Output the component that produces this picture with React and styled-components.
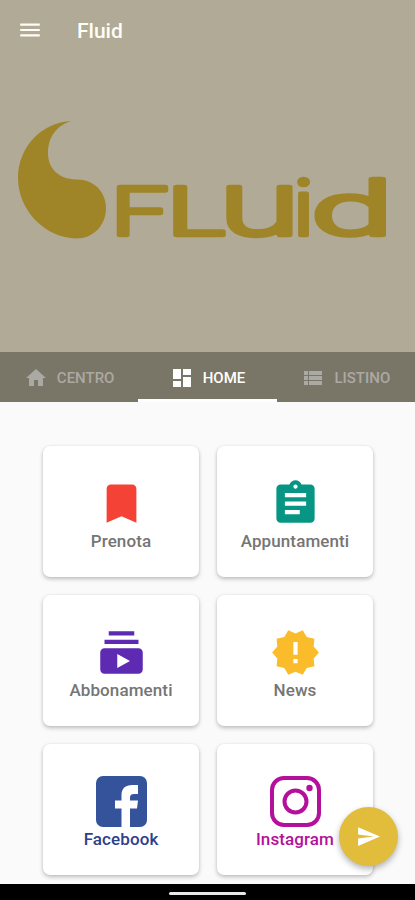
import React, { useState } from 'react';
import styled, { createGlobalStyle } from 'styled-components';
import {
  MdAssignment,
  MdBookmark,
  MdDashboard,
  MdHome,
  MdMenu,
  MdNewReleases,
  MdSend,
  MdSubscriptions,
  MdViewList,
} from 'react-icons/md';

const Global = createGlobalStyle`
  * {
    box-sizing: border-box;
  }

  body {
    margin: 0;
    background-color: #fafafa;
    font-family: Roboto, 'Liberation Sans', sans-serif;
  }

  button {
    border: 0;
    padding: 0;
    background: none;
    font: inherit;
    cursor: pointer;
  }
`;

const Screen = styled.div`
  position: relative;
  height: 900px;
  display: flex;
  flex-direction: column;
  overflow: hidden;
  background-color: #fafafa;
`;

const Hero = styled.header`
  height: 352px;
  flex: none;
  background-color: #b0aa96;
`;

const Toolbar = styled.div`
  height: 60px;
  padding-left: 17px;
  display: flex;
  align-items: center;
  gap: 34px;
  color: #fffdf5;

  & button {
    display: flex;
    color: inherit;
  }

  & h1 {
    margin: 2px 0 0;
    font-size: 21px;
    font-weight: 500;
    line-height: 26px;
  }
`;

const Logo = styled.svg`
  display: block;
  width: 415px;
  height: 200px;
  fill: #a08528;
  font-family: Roboto, 'Liberation Sans', sans-serif;
  font-weight: 300;

  & text {
    stroke: #a08528;
    stroke-width: 4.5px;
    stroke-linejoin: round;
  }
`;

const TabBar = styled.nav`
  height: 50px;
  flex: none;
  display: flex;
  background-color: #7a7667;
`;

const Tab = styled.button`
  flex: 1;
  display: flex;
  align-items: center;
  justify-content: center;
  gap: 9px;
  padding-top: 4px;
  border-bottom: 3px solid ${({ $active }) => ($active ? '#fff' : 'transparent')};
  color: ${({ $active }) => ($active ? '#fff' : '#aaa9a3')};
  font-size: 15px;
  font-weight: 500;
`;

const Grid = styled.main`
  flex: 1;
  min-height: 0;
  padding: 44px 42px 0 43px;
  display: grid;
  grid-template-columns: 1fr 1fr;
  grid-auto-rows: 131px;
  gap: 18px;
  align-content: start;
  overflow: hidden;
`;

const Card = styled.button`
  padding-top: 32px;
  display: flex;
  flex-direction: column;
  align-items: center;
  border-radius: 7px;
  background-color: #fff;
  box-shadow: 0 2px 4px rgba(0, 0, 0, 0.24), 0 0 2px rgba(0, 0, 0, 0.08);

  & svg {
    display: block;
    color: ${({ $color }) => $color};
  }
`;

const Label = styled.span`
  color: ${({ $color }) => $color};
  font-size: 17px;
  font-weight: 500;
  line-height: 24px;
  letter-spacing: 0.1px;
`;

const Fab = styled.button`
  position: absolute;
  right: 17px;
  bottom: 34px;
  width: 59px;
  height: 59px;
  display: flex;
  align-items: center;
  justify-content: center;
  border-radius: 50%;
  background-color: #e2bc3b;
  color: #fff;
  box-shadow: 0 3px 6px rgba(0, 0, 0, 0.3);
`;

const SystemBar = styled.footer`
  height: 16px;
  flex: none;
  display: flex;
  justify-content: center;
  align-items: center;
  background-color: #000;

  & span {
    width: 77px;
    height: 3px;
    margin-top: 2px;
    border-radius: 2px;
    background-color: #e8e8e8;
  }
`;

function FluidLogo() {
  return (
    <Logo viewBox="0 60 415 200">
      <path d="M71.5 121C54 126 48 140 48 153C48 168 58 179 76 179.500C94 179 106 192 106 208C106 225 94 238.500 76 238.500C46 238 18 211 18 178C18 147 42 122 71.500 121Z" />
      <text y="234.500">
        <tspan x="111" fontSize="67" textLength="57" lengthAdjust="spacingAndGlyphs">F</tspan>
        <tspan x="167" fontSize="67" textLength="58" lengthAdjust="spacingAndGlyphs">L</tspan>
        <tspan x="219" fontSize="90" textLength="81" lengthAdjust="spacingAndGlyphs">u</tspan>
        <tspan x="293" fontSize="78" textLength="21" lengthAdjust="spacingAndGlyphs">i</tspan>
        <tspan x="311" fontSize="75" textLength="82" lengthAdjust="spacingAndGlyphs">d</tspan>
      </text>
    </Logo>
  );
}

function FacebookIcon() {
  return (
    <svg width="51" height="51" viewBox="0 0 51 51">
      <rect width="51" height="51" rx="7" fill="#34539b" />
      <path
        d="M25.500 51V32.500H19V24.500H25.500V19C25.500 12.500 29.500 9 36 9H42V18H38C35.500 18 34 19 34 21.500V24.500H42L41 32.500H34V51Z"
        fill="#fff"
      />
    </svg>
  );
}

function InstagramIcon() {
  return (
    <svg width="51" height="51" viewBox="0 0 51 51" fill="none" stroke="currentColor">
      <rect x="2" y="2" width="47" height="47" rx="12" strokeWidth="4" />
      <circle cx="25.500" cy="25.500" r="11" strokeWidth="4" />
      <circle cx="39.500" cy="12" r="3.200" fill="currentColor" stroke="none" />
    </svg>
  );
}

const tabs = [
  { name: 'CENTRO', Icon: MdHome },
  { name: 'HOME', Icon: MdDashboard },
  { name: 'LISTINO', Icon: MdViewList },
];

const cards = [
  { name: 'Prenota', Icon: MdBookmark, color: '#f44336' },
  { name: 'Appuntamenti', Icon: MdAssignment, color: '#089684' },
  { name: 'Abbonamenti', Icon: MdSubscriptions, color: '#5e2ab2' },
  { name: 'News', Icon: MdNewReleases, color: '#fbbc2b' },
  { name: 'Facebook', Icon: FacebookIcon, color: '#34539b', labelColor: '#2c418c' },
  { name: 'Instagram', Icon: InstagramIcon, color: '#b5109b', labelColor: '#b5109b' },
];

function App() {
  const [current, setCurrent] = useState('HOME');

  return (
    <Screen>
      <Global />
      <Hero>
        <Toolbar>
          <button aria-label="Menu">
            <MdMenu size={26} />
          </button>
          <h1>Fluid</h1>
        </Toolbar>
        <FluidLogo />
      </Hero>

      <TabBar>
        {tabs.map(({ name, Icon }) => (
          <Tab key={name} $active={name === current} onClick={() => setCurrent(name)}>
            <Icon size={24} />
            {name}
          </Tab>
        ))}
      </TabBar>

      <Grid>
        {cards.map(({ name, Icon, color, labelColor }) => (
          <Card key={name} $color={color}>
            <Icon size={51} />
            <Label $color={labelColor || '#757575'}>{name}</Label>
          </Card>
        ))}
      </Grid>

      <Fab aria-label="Invia">
        <MdSend size={25} />
      </Fab>

      <SystemBar>
        <span />
      </SystemBar>
    </Screen>
  );
}

export default App;
